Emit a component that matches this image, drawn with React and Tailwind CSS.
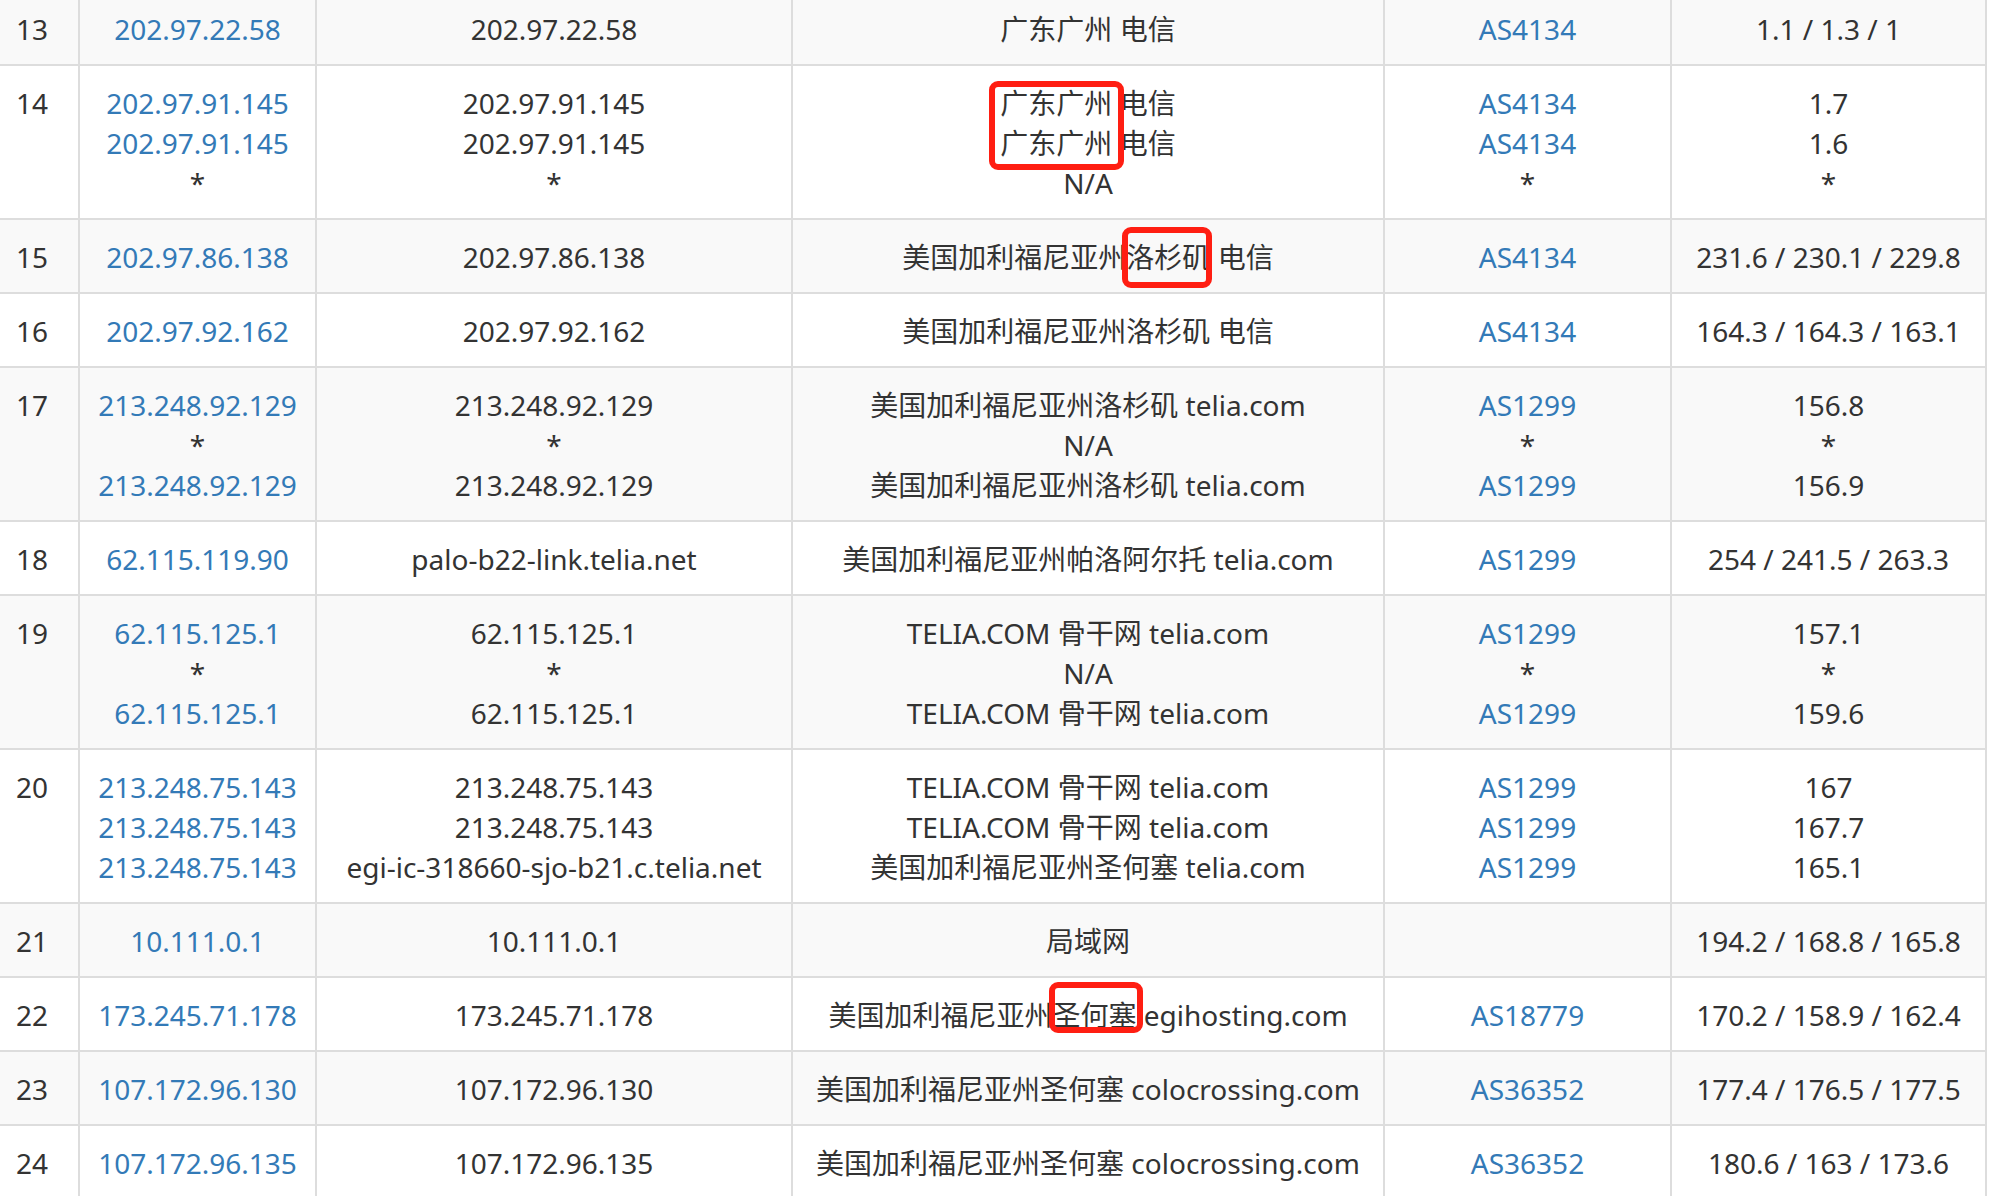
import React from "react";

const L = "text-[#337ab7]";

function Hl({ children, box }) {
  return (
    <span className="relative inline-block">
      {children}
      <span className={"absolute border-[6px] border-[#ff1e12] rounded-[9px] " + box} />
    </span>
  );
}

const rows = [
  { n: 13, ip: ["202.97.22.58"], host: ["202.97.22.58"], loc: ["广东广州 电信"], as: ["AS4134"], t: ["1.1 / 1.3 / 1"] },
  {
    n: 14,
    ip: ["202.97.91.145", "202.97.91.145", "*"],
    host: ["202.97.91.145", "202.97.91.145", "*"],
    loc: [
      <>
        <Hl box="-left-[11px] -right-[12px] -top-[2px] h-[89px]">广东广州</Hl> 电信
      </>,
      "广东广州 电信",
      "N/A",
    ],
    as: ["AS4134", "AS4134", "*"],
    t: ["1.7", "1.6", "*"],
  },
  {
    n: 15,
    ip: ["202.97.86.138"],
    host: ["202.97.86.138"],
    loc: [
      <>
        美国加利福尼亚州<Hl box="-left-[4px] -right-[2px] -top-[10px] h-[61px]">洛杉矶</Hl> 电信
      </>,
    ],
    as: ["AS4134"],
    t: ["231.6 / 230.1 / 229.8"],
  },
  { n: 16, ip: ["202.97.92.162"], host: ["202.97.92.162"], loc: ["美国加利福尼亚州洛杉矶 电信"], as: ["AS4134"], t: ["164.3 / 164.3 / 163.1"] },
  {
    n: 17,
    ip: ["213.248.92.129", "*", "213.248.92.129"],
    host: ["213.248.92.129", "*", "213.248.92.129"],
    loc: ["美国加利福尼亚州洛杉矶 telia.com", "N/A", "美国加利福尼亚州洛杉矶 telia.com"],
    as: ["AS1299", "*", "AS1299"],
    t: ["156.8", "*", "156.9"],
  },
  { n: 18, ip: ["62.115.119.90"], host: ["palo-b22-link.telia.net"], loc: ["美国加利福尼亚州帕洛阿尔托 telia.com"], as: ["AS1299"], t: ["254 / 241.5 / 263.3"] },
  {
    n: 19,
    ip: ["62.115.125.1", "*", "62.115.125.1"],
    host: ["62.115.125.1", "*", "62.115.125.1"],
    loc: ["TELIA.COM 骨干网 telia.com", "N/A", "TELIA.COM 骨干网 telia.com"],
    as: ["AS1299", "*", "AS1299"],
    t: ["157.1", "*", "159.6"],
  },
  {
    n: 20,
    ip: ["213.248.75.143", "213.248.75.143", "213.248.75.143"],
    host: ["213.248.75.143", "213.248.75.143", "egi-ic-318660-sjo-b21.c.telia.net"],
    loc: ["TELIA.COM 骨干网 telia.com", "TELIA.COM 骨干网 telia.com", "美国加利福尼亚州圣何塞 telia.com"],
    as: ["AS1299", "AS1299", "AS1299"],
    t: ["167", "167.7", "165.1"],
  },
  { n: 21, ip: ["10.111.0.1"], host: ["10.111.0.1"], loc: ["局域网"], as: [""], t: ["194.2 / 168.8 / 165.8"] },
  {
    n: 22,
    ip: ["173.245.71.178"],
    host: ["173.245.71.178"],
    loc: [
      <>
        美国加利福尼亚州<Hl box="-left-[3px] -right-[7px] -top-[13px] h-[51px]">圣何塞</Hl> egihosting.com
      </>,
    ],
    as: ["AS18779"],
    t: ["170.2 / 158.9 / 162.4"],
  },
  { n: 23, ip: ["107.172.96.130"], host: ["107.172.96.130"], loc: ["美国加利福尼亚州圣何塞 colocrossing.com"], as: ["AS36352"], t: ["177.4 / 176.5 / 177.5"] },
  { n: 24, ip: ["107.172.96.135"], host: ["107.172.96.135"], loc: ["美国加利福尼亚州圣何塞 colocrossing.com"], as: ["AS36352"], t: ["180.6 / 163 / 173.6"] },
];

function Lines({ items, link }) {
  return items.map((x, i) => (
    <div key={i} className={link && x !== "*" ? L : ""}>
      {x === "" ? "\u00a0" : x}
    </div>
  ));
}

export default function App() {
  return (
    <div
      className="h-[1196px] overflow-hidden bg-white text-[#333333] text-[28px] leading-[40px] whitespace-nowrap"
      style={{ fontFamily: '"Noto Sans", "Noto Sans CJK SC", sans-serif' }}
    >
      <div className="-mt-[8px] w-[1987px]">
        {rows.map((r, idx) => (
          <div
            key={r.n}
            className={
              "grid grid-cols-[80px_237px_476px_592px_287px_315px] border-b-2 border-[#dddddd] " +
              (idx % 2 === 0 ? "bg-[#f9f9f9]" : "bg-white")
            }
          >
            <div className="border-r-2 border-[#dddddd] pt-[17px] pb-[15px] px-4 text-left">{r.n}</div>
            <div className="border-r-2 border-[#dddddd] pt-[17px] pb-[15px] text-center">
              <Lines items={r.ip} link />
            </div>
            <div className="border-r-2 border-[#dddddd] pt-[17px] pb-[15px] text-center">
              <Lines items={r.host} />
            </div>
            <div className="border-r-2 border-[#dddddd] pt-[17px] pb-[15px] text-center">
              <Lines items={r.loc} />
            </div>
            <div className="border-r-2 border-[#dddddd] pt-[17px] pb-[15px] text-center">
              <Lines items={r.as} link />
            </div>
            <div className="border-r-2 border-[#dddddd] pt-[17px] pb-[15px] text-center">
              <Lines items={r.t} />
            </div>
          </div>
        ))}
      </div>
    </div>
  );
}
